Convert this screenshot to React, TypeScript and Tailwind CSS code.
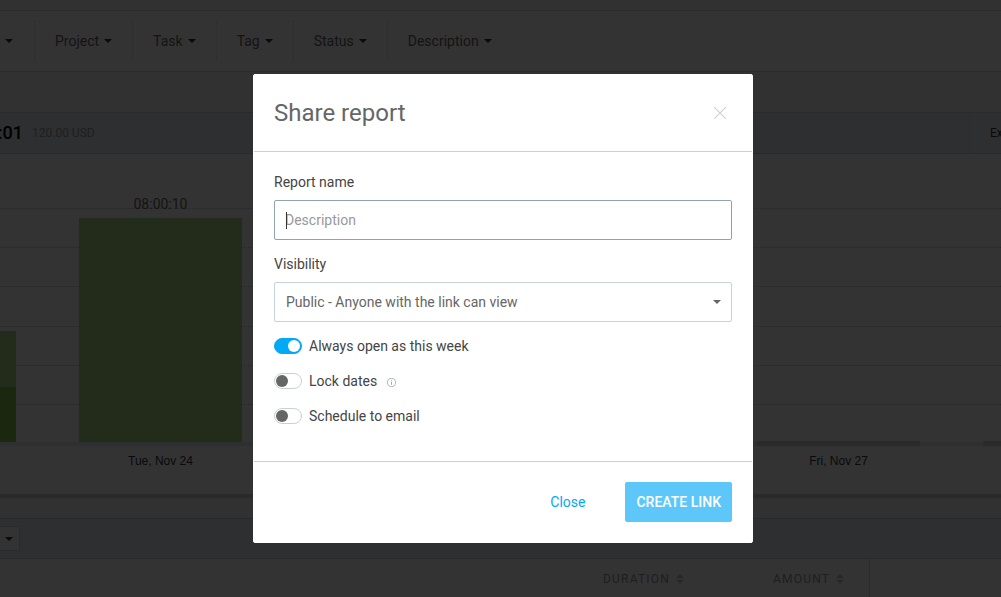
import React from "react";

function Caret({ className = "" }: { className?: string }) {
  return (
    <svg aria-hidden="true" viewBox="0 0 8 4" className={`h-1 w-2 shrink-0 ${className}`}>
      <path d="M0 0h8L4 4z" fill="currentColor" />
    </svg>
  );
}

function SortIcon() {
  return (
    <svg aria-hidden="true" viewBox="0 0 8 10" className="h-[10px] w-2 shrink-0 text-[#b8c4cb]">
      <path d="M0 4h8L4 0zM0 6h8L4 10z" fill="currentColor" />
    </svg>
  );
}

const filters = ["Project", "Task", "Tag", "Status", "Description"];

function FilterBar() {
  return (
    <nav className="flex h-[61px] items-center overflow-hidden border-b border-[#c6d2d9] bg-white text-sm text-[#666]">
      <button type="button" aria-label="Team" className="flex h-10 w-[34px] shrink-0 items-center pl-[5px] text-[#333]">
        <Caret />
      </button>
      {filters.map((name) => (
        <button
          key={name}
          type="button"
          className="flex h-10 shrink-0 items-center gap-[5px] border-l border-dotted border-[#c6d2d9] px-5"
        >
          {name}
          <Caret className="text-[#333]" />
        </button>
      ))}
    </nav>
  );
}

function SummaryBar() {
  return (
    <div className="flex h-[42px] items-center border-y border-[#c6d2d9] bg-[#e4eaee]">
      <div className="flex w-[23px] shrink-0 justify-end overflow-hidden text-lg font-medium text-black">:01</div>
      <span className="ml-[9px] grow text-xs text-[#999]">120.00 USD</span>
      <div className="flex h-full w-8 shrink-0 items-center overflow-hidden border-l border-dotted border-[#c6d2d9] pl-5">
        <a href="#export" className="text-xs text-[#333]">Export</a>
      </div>
    </div>
  );
}

const gridRows = [0, 1, 2, 3, 4, 5];

const days = [
  { label: "Tue, Nov 24", total: "08:00:10", bar: true },
  { label: "Wed, Nov 25", total: "", bar: false },
  { label: "Thu, Nov 26", total: "", bar: false },
  { label: "Fri, Nov 27", total: "", bar: false },
  { label: "", total: "", bar: false },
];

function Chart() {
  return (
    <section className="grid grid-cols-1 overflow-hidden border-b-4 border-[#c6d2d9] bg-white">
      <div className="col-start-1 row-start-1 flex flex-col pt-[15px]">
        {gridRows.map((row) => (
          <div
            key={row}
            className={`${row === 0 || row === 3 ? "h-10" : "h-[39px]"} border-b border-dotted border-[#b8c4cb]`}
          />
        ))}
        <div className="mt-[37px] h-1 bg-[#e4eaee]" />
      </div>
      <div className="col-start-1 row-start-1 flex h-[340px] min-w-0 overflow-hidden">
        <div className="flex w-[47px] shrink-0 flex-col pt-[177px]">
          <div className="h-14 w-4 bg-[#aed581]" />
          <div className="h-[55px] w-4 bg-[#8bc34a]" />
        </div>
        {days.map((day, index) => (
          <div key={index} className="w-[226px] shrink-0 pl-8">
            <div className="w-[163px] text-center">
              <div className="flex h-16 items-end justify-center text-sm text-[#666]">
                <span className="pb-1">{day.total}</span>
              </div>
              <div className={day.bar ? "h-56 bg-[#aed581]" : "h-[223px]"} />
              <div className={day.bar ? "h-1" : "h-[5px] bg-[#c6d2d9]"} />
              <div className="pt-[7px] font-['Liberation_Sans',sans-serif] text-xs text-[#333]">{day.label}</div>
            </div>
          </div>
        ))}
      </div>
    </section>
  );
}

function ReportTable() {
  return (
    <section>
      <div className="flex h-10 items-center border-t border-[#c6d2d9] bg-[#e4eaee]">
        <button
          type="button"
          aria-label="Group by"
          className="flex h-[25px] w-5 items-center border border-l-0 border-[#c6d2d9] bg-white pl-[5px] text-[#333]"
        >
          <Caret />
        </button>
      </div>
      <table className="w-full table-fixed border-collapse bg-white text-xs tracking-widest text-[#999]">
        <thead>
          <tr className="h-[39px] border-y border-[#c6d2d9]">
            <th className="w-[603px]" />
            <th scope="col" className="w-[170px] p-0 pt-px text-left font-normal">
              <button type="button" className="flex items-center gap-[6px] tracking-widest">DURATION<SortIcon /></button>
            </th>
            <th scope="col" className="w-24 p-0 pt-px text-left font-normal">
              <button type="button" className="flex items-center gap-[6px] tracking-widest">AMOUNT<SortIcon /></button>
            </th>
            <th className="border-l border-[#c6d2d9]" />
          </tr>
        </thead>
      </table>
    </section>
  );
}

function Toggle({ label, defaultChecked = false, info = false }: { label: string; defaultChecked?: boolean; info?: boolean }) {
  return (
    <div className="flex h-[15px] items-center">
      <label className="flex items-center gap-[7px]">
        <span className="grid items-center">
          <input
            type="checkbox"
            role="switch"
            defaultChecked={defaultChecked}
            className="peer col-start-1 row-start-1 h-4 w-7 appearance-none rounded-full border border-[#c6d2d9] bg-white checked:border-[#03a9f4] checked:bg-[#03a9f4]"
          />
          <span className="pointer-events-none col-start-1 row-start-1 ml-[2px] size-3 rounded-full bg-[#666] peer-checked:ml-[14px] peer-checked:bg-white" />
        </span>
        {label}
      </label>
      {info && (
        <svg aria-hidden="true" viewBox="0 0 10 10" className="mt-1 ml-[10px] size-[9px] text-[#90a4ae]">
          <circle cx="5" cy="5" r="4.5" fill="none" stroke="currentColor" strokeWidth="0.9" />
          <path d="M4.5 2.4h1v1h-1zM4.5 4.2h1v3.4h-1z" fill="currentColor" />
        </svg>
      )}
    </div>
  );
}

function ShareDialog() {
  return (
    <form
      role="dialog"
      aria-labelledby="share-title"
      className="w-[500px] rounded-xs border border-white bg-white text-sm text-[#444]"
    >
      <header className="flex h-[77px] items-center justify-between border-b border-[#c6d2d9] pr-[26px] pl-5">
        <h1 id="share-title" className="text-2xl text-[#666]">Share report</h1>
        <button type="button" aria-label="Close dialog" className="text-[#c6d2d9]">
          <svg aria-hidden="true" viewBox="0 0 12 12" className="size-3">
            <path d="M0 0l12 12M12 0L0 12" stroke="currentColor" strokeWidth="1.1" />
          </svg>
        </button>
      </header>
      <div className="flex h-[309px] flex-col px-5 pt-5">
        <label htmlFor="report-name" className="leading-5">Report name</label>
        <div className="relative mt-2">
          <input
            id="report-name"
            placeholder="Description"
            className="h-10 w-full rounded-xs border border-[#90a4ae] px-[10px] caret-transparent outline-none placeholder:text-[#999]"
          />
          <span className="absolute top-3 left-3 h-[17px] w-px bg-[#333]" />
        </div>
        <label htmlFor="visibility" className="mt-[14px] leading-5">Visibility</label>
        <div className="relative mt-2">
          <select
            id="visibility"
            className="h-10 w-full appearance-none rounded-xs border border-[#c6d2d9] bg-white px-[11px] text-[#666]"
          >
            <option>Public - Anyone with the link can view</option>
          </select>
          <Caret className="pointer-events-none absolute top-[18px] right-[11px] text-[#666]" />
        </div>
        <div className="mt-4 flex flex-col gap-5">
          <Toggle label="Always open as this week" defaultChecked />
          <Toggle label="Lock dates" info />
          <Toggle label="Schedule to email" />
        </div>
      </div>
      <footer className="flex items-center justify-end gap-10 border-t border-[#c6d2d9] p-5">
        <button type="button" className="text-[#03a9f4]">Close</button>
        <button type="submit" className="h-10 rounded-xs bg-[#5dc7f9] px-[11px] font-medium text-white">CREATE LINK</button>
      </footer>
    </form>
  );
}

export default function App() {
  return (
    <div className="min-h-screen bg-[#f2f6f8] font-[Roboto,sans-serif]">
      <main>
        <div className="h-[11px] border-b border-[#c6d2d9]" />
        <FilterBar />
        <div className="h-10" />
        <SummaryBar />
        <Chart />
        <div className="h-5" />
        <ReportTable />
      </main>
      <div className="fixed inset-0 flex items-start justify-center overflow-auto bg-black/80 pt-[74px] pl-[5px]">
        <ShareDialog />
      </div>
    </div>
  );
}
